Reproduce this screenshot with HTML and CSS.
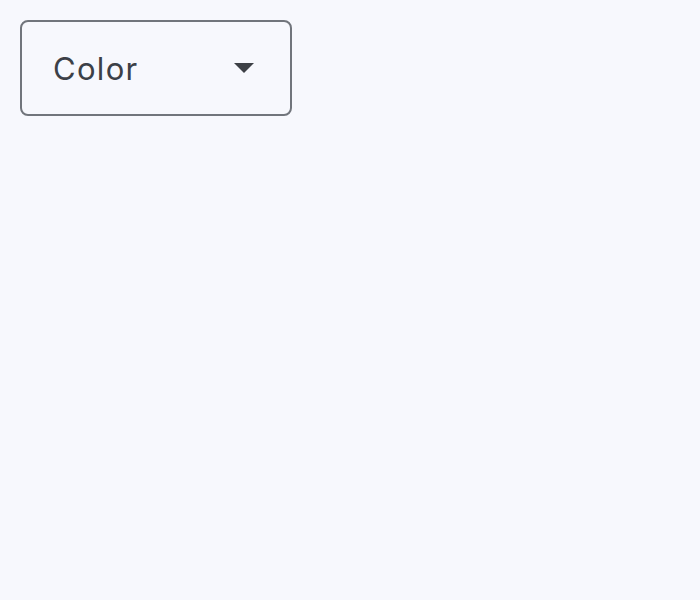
FILE: index.html
```html
<!DOCTYPE html>
<html>
<head>
<meta charset="utf-8">
<link rel="stylesheet" href="styles.css">
</head>
<body>
<div class="page">
  <div class="select">
    <span class="label">Color</span>
    <svg class="arrow" width="20" height="10" viewBox="0 0 20 10"><path d="M0 0 L20 0 L10 10 Z" fill="#3d4046"/></svg>
  </div>
</div>
</body>
</html>
```
FILE: styles.css
```css
html, body {
  margin: 0;
  padding: 0;
  background: #f7f8fd;
}
.page {
  padding: 20px;
  height: 600px;
  box-sizing: border-box;
}
.select {
  width: 272px;
  height: 96px;
  box-sizing: border-box;
  border: 2px solid #71757c;
  border-radius: 8px;
  display: flex;
  align-items: center;
  justify-content: space-between;
  padding: 0 36px 0 31px;
}
.label {
  font-family: Inter, Roboto, "Liberation Sans", sans-serif;
  font-size: 31px;
  color: #3c4047;
  letter-spacing: 1.3px;
}
.arrow {
  display: block;
}
```
